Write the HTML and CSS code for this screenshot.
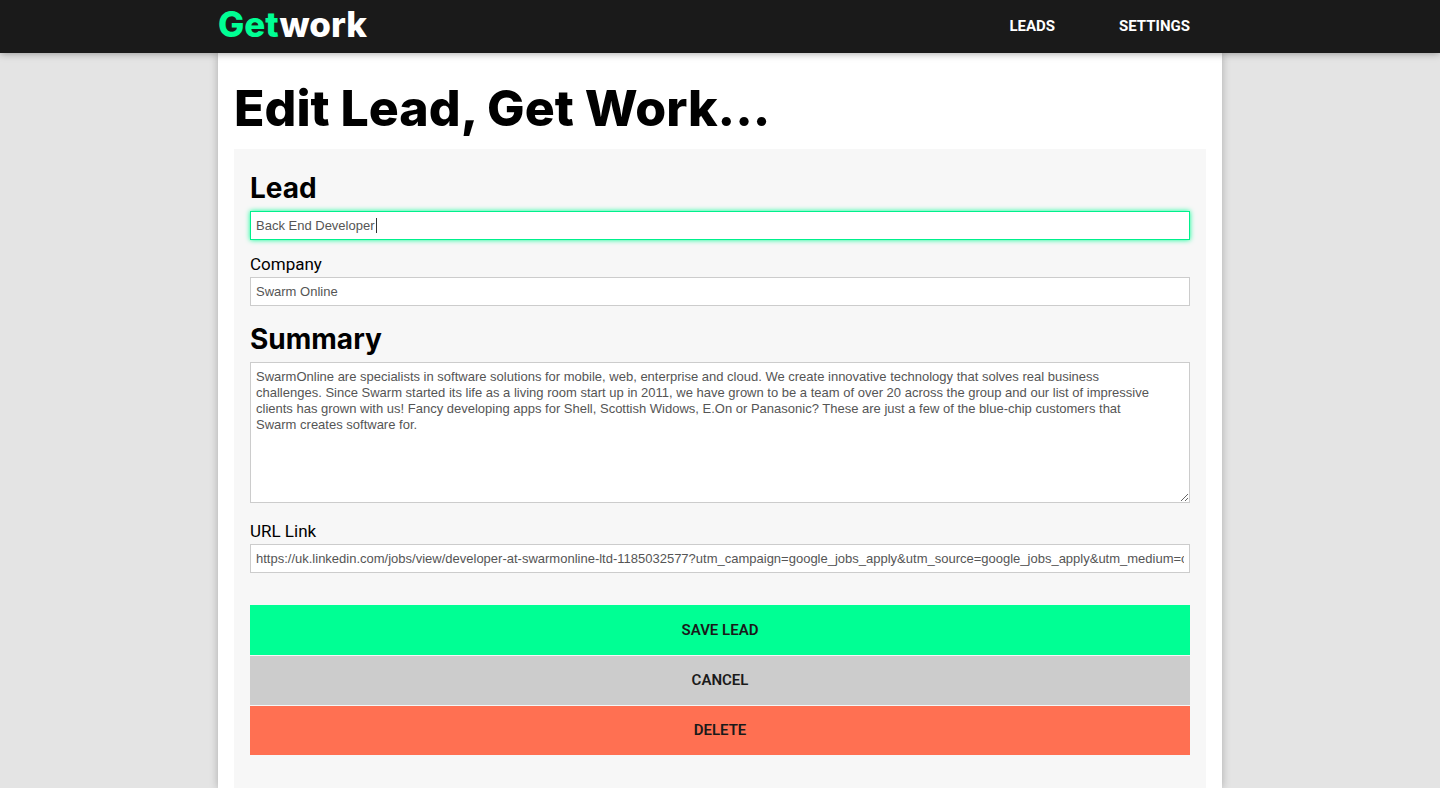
FILE: index.html
```html
<!DOCTYPE html>
<html lang="en">
<head>
<meta charset="utf-8">
<meta name="viewport" content="width=device-width, initial-scale=1">
<title>Getwork</title>
<link rel="stylesheet" href="styles.css">
</head>
<body>
<header class="site-header">
  <div class="header-inner">
    <a class="logo" href="#"><span class="logo-accent">Get</span>work</a>
    <nav class="main-nav">
      <a class="nav-link" href="#leads">LEADS</a>
      <a class="nav-link" href="#settings">SETTINGS</a>
    </nav>
  </div>
</header>
<main class="page">
  <h1 class="page-title">Edit Lead, Get Work...</h1>
  <form class="lead-form">
    <label class="label-large" for="lead">Lead</label>
    <div class="field-wrap">
      <input class="field field-lead" id="lead" type="text" value="Back End Developer" autofocus>
      <span class="caret"></span>
    </div>
    <label class="label-small" for="company">Company</label>
    <input class="field" id="company" type="text" value="Swarm Online">
    <label class="label-large label-summary" for="summary">Summary</label>
    <textarea class="field summary" id="summary" spellcheck="false">SwarmOnline are specialists in software solutions for mobile, web, enterprise and cloud. We create innovative technology that solves real business challenges. Since Swarm started its life as a living room start up in 2011, we have grown to be a team of over 20 across the group and our list of impressive clients has grown with us! Fancy developing apps for Shell, Scottish Widows, E.On or Panasonic? These are just a few of the blue-chip customers that Swarm creates software for.</textarea>
    <label class="label-small" for="url">URL Link</label>
    <input class="field" id="url" type="text" value="https://uk.linkedin.com/jobs/view/developer-at-swarmonline-ltd-1185032577?utm_campaign=google_jobs_apply&amp;utm_source=google_jobs_apply&amp;utm_medium=organic">
    <div class="actions">
      <button class="button button-save" type="submit">SAVE LEAD</button>
      <button class="button button-cancel" type="button">CANCEL</button>
      <button class="button button-delete" type="button">DELETE</button>
    </div>
  </form>
</main>
<script src="script.js"></script>
</body>
</html>
```
FILE: styles.css
```css
* {
  box-sizing: border-box;
}

body {
  margin: 0;
  min-height: 100vh;
  display: flex;
  flex-direction: column;
  background: #e4e4e4;
  color: #000;
  font-family: Roboto, "Liberation Sans", sans-serif;
}

.site-header {
  position: relative;
  z-index: 1;
  padding: 0 16px;
  background: #1a1a1a;
  box-shadow: 0 0 8px rgba(0, 0, 0, 0.4);
}

.header-inner {
  display: flex;
  justify-content: space-between;
  align-items: center;
  max-width: 1004px;
  min-height: 53px;
  margin: 0 auto;
  padding-right: 32px;
}

.logo {
  color: #fff;
  font: 800 35px/48px Inter, sans-serif;
  text-decoration: none;
  padding-bottom: 5px;
}

.logo-accent {
  color: #00ff94;
}

.main-nav {
  display: flex;
  gap: 64px;
  padding-bottom: 2px;
}

.nav-link {
  color: #fff;
  font-size: 15px;
  font-weight: 700;
  line-height: 20px;
  text-decoration: none;
}

.page {
  flex: 1;
  display: flex;
  flex-direction: column;
  width: 100%;
  max-width: 1004px;
  margin: 0 auto;
  padding: 24px 16px 0;
  background: #fff;
  box-shadow: 0 0 8px rgba(0, 0, 0, 0.25);
}

.page-title {
  margin: 0 0 10px;
  font: 800 50px/62px Inter, sans-serif;
}

.lead-form {
  flex: 1;
  display: flex;
  flex-direction: column;
  padding: 16px 16px 32px;
  background: #f7f7f7;
}

.label-large {
  font: 700 28px/46px Inter, sans-serif;
}

.label-summary {
  margin-top: 10px;
}

.label-small {
  margin-top: 12px;
  font-size: 17px;
  line-height: 25px;
}

.field-wrap {
  display: flex;
  position: relative;
}

.field {
  width: 100%;
  height: 29px;
  margin: 0;
  padding: 6px 5px;
  border: 1px solid #ccc;
  border-radius: 0;
  background: #fff;
  color: #555;
  font: 13px/16px "Liberation Sans", Arial, sans-serif;
}

.field:focus {
  outline: none;
  border-color: #00f08c;
  box-shadow: 0 0 5px #00ff94;
}

.field-lead {
  caret-color: transparent;
}

.caret {
  position: absolute;
  top: 7px;
  left: 126px;
  width: 1px;
  height: 15px;
  background: #333;
  visibility: hidden;
}

.field-lead:focus + .caret {
  visibility: visible;
}

.summary {
  height: 141px;
  margin-bottom: 4px;
  padding-right: 30px;
  resize: both;
}

.actions {
  display: grid;
  gap: 1px;
  margin-top: 32px;
}

.button {
  padding: 15px;
  border: 0;
  color: #1a1a1a;
  font: 600 15px/19px Roboto, sans-serif;
  cursor: pointer;
}

.button-save {
  padding-top: 16px;
  background: #00ff94;
}

.button-cancel {
  background: #ccc;
}

.button-delete {
  background: #ff7052;
}
```
FILE: script.js
```js
const lead = document.getElementById("lead");
lead.focus();
lead.setSelectionRange(lead.value.length, lead.value.length);
```
